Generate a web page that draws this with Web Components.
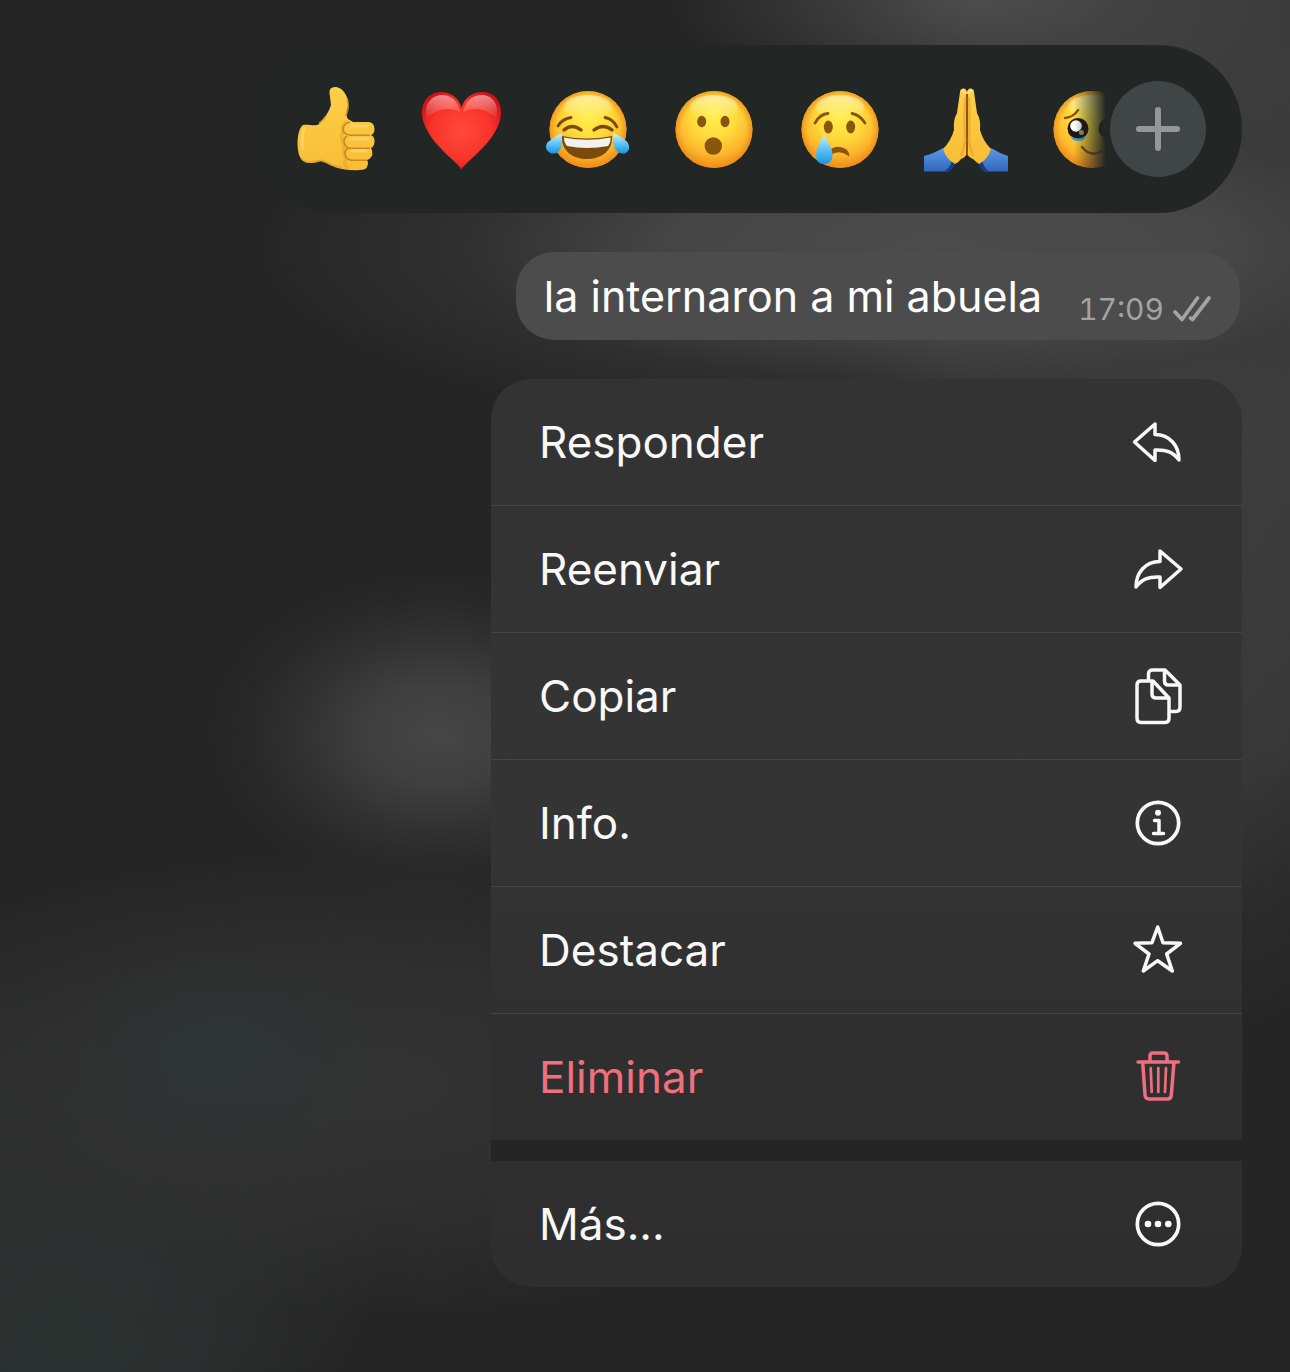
<!DOCTYPE html>
<html lang="es">
<head>
<meta charset="utf-8">
<meta name="viewport" content="width=device-width, initial-scale=1">
<title>Mensaje</title>
<style>
  body {
    margin: 0;
    min-height: 100vh;
    background: #252525;
    color: #f5f5f5;
    font-family: Inter, "Liberation Sans", sans-serif;
  }
</style>
</head>
<body>

<message-overlay>
  <reaction-bar></reaction-bar>
  <message-bubble time="17:09">la internaron a mi abuela</message-bubble>
  <context-menu>
    <menu-item icon="reply">Responder</menu-item>
    <menu-item icon="forward">Reenviar</menu-item>
    <menu-item icon="copy">Copiar</menu-item>
    <menu-item icon="info">Info.</menu-item>
    <menu-item icon="star">Destacar</menu-item>
    <menu-item icon="trash" danger>Eliminar</menu-item>
    <menu-item icon="more" apart>Más...</menu-item>
  </context-menu>
</message-overlay>

<script>
// shared gradients, every emoji svg gets its own copy
const defs = `
  <defs>
    <radialGradient id="face" cx="50%" cy="32%" r="70%">
      <stop offset="0" stop-color="#fff04f"/>
      <stop offset=".4" stop-color="#fedc3c"/>
      <stop offset=".7" stop-color="#fdba2d"/>
      <stop offset="1" stop-color="#ee8a1a"/>
    </radialGradient>
    <radialGradient id="rim" cx="50%" cy="50%" r="50%">
      <stop offset=".82" stop-color="#f09a1c" stop-opacity="0"/>
      <stop offset="1" stop-color="#ee8c18" stop-opacity=".75"/>
    </radialGradient>
    <linearGradient id="shine" x2="0" y2="1">
      <stop offset="0" stop-color="#fff" stop-opacity=".5"/>
      <stop offset="1" stop-color="#fff" stop-opacity="0"/>
    </linearGradient>
    <linearGradient id="tear" x2="0" y2="1">
      <stop offset="0" stop-color="#d5f3fc"/>
      <stop offset=".5" stop-color="#62c6f5"/>
      <stop offset="1" stop-color="#1794e6"/>
    </linearGradient>
    <linearGradient id="skin" x2="0" y2="1">
      <stop offset="0" stop-color="#ffcf4a"/>
      <stop offset="1" stop-color="#f8bd35"/>
    </linearGradient>
    <radialGradient id="heart" cx="50%" cy="50%" r="58%">
      <stop offset="0" stop-color="#ff4a3c"/>
      <stop offset=".65" stop-color="#f93329"/>
      <stop offset="1" stop-color="#cf1219"/>
    </radialGradient>
    <linearGradient id="sleeve" x2="0" y2="1">
      <stop offset="0" stop-color="#5b9aea"/>
      <stop offset="1" stop-color="#3167bd"/>
    </linearGradient>
  </defs>`;

const face = `
  <circle cx="48" cy="48.500" r="38.500" fill="url(#face)"/>
  <circle cx="48" cy="48.500" r="38.500" fill="url(#rim)"/>
  <ellipse cx="48" cy="26" rx="24" ry="12" fill="url(#shine)"/>`;

const emojis = [
  ["Me gusta", `
    <path fill="url(#skin)" d="M15 44C21 43 27 46 31 43C36 38 41 31 43 24L41.500 12Q41 6 47 6C55 6 61 16 60 25Q57 34 60 38L65 41H81Q86.500 42 86.500 48Q86.500 53 83 54Q87 56 86.500 61Q86 66 83 67Q85 70 84 75Q82 78 79 79Q81 82 79 86Q78 89 72 89C62 90 55 88 50 87C43 85 37 80 33 80C29 80 28 82 22 82Q15 82 12 76C8 67 9 48 15 44Z"/>
    <path fill="none" stroke="#e3a22a" stroke-width="3.500" opacity=".5" d="M59 40Q54 44 55 49Q52 58 56 64Q54 73 58 78Q55 84 60 88"/>
    <path fill="none" stroke="#c98a1f" stroke-width="1.600" d="M82 54.300H62Q55 53 55 48Q55 43 62 41M82 67.300H62Q56 66 56 60Q56 57 59 55M79 79.300H63Q57 78 57 72Q57 69 60 67"/>
    <path fill="none" stroke="#dca02b" stroke-width="2" opacity=".7" d="M13 77Q16 81 22 81Q28 81 33 79.500Q38 81 44 84L54 87M59 17Q62 28 57 35M31 42Q34 41 38 35"/>
    <path fill="none" stroke="#ffdf7a" stroke-width="3" stroke-linecap="round" opacity=".6" d="M63 45H80M63 58H80M64 70H78M16 48Q13 58 15 68"/>`],
  ["Me encanta", `
    <path fill="url(#heart)" d="M47.500 88.500C43 80 11 60 8 34C7 20 16 11 27 11C37 11 45 17 47.500 27C50 17 58 11 69 11C80 11 88 20 87 34C84 60 52 80 47.500 88.500Z"/>
    <path fill="url(#shine)" d="M13 38C9 23 18 14 28 14C37 14 43 19 46 31C36 26 22 27 13 38ZM49 31C52 19 59 14 68 14C78 14 86 23 82 38C73 27 59 26 49 31Z"/>`],
  ["Me divierte", `${face}
    <path fill="none" stroke="#7b4a0b" stroke-width="2.800" stroke-linecap="round" d="M18 45Q22 38 31 36.500M65 36.500Q73 38 77 46"/>
    <path fill="none" stroke="#7b4a0b" stroke-width="3.400" stroke-linecap="round" d="M24 49Q32 42 41 49M54 49Q63 42 72 49"/>
    <path fill="#7b4a0b" d="M22 55Q47 60 72 55C73 70 61 78 47 78C33 78 21 70 22 55Z"/>
    <path fill="#f1f1f1" d="M24 56.500Q47 61 70.500 56.500Q71 62 68 65Q47 69 27 65Q24 62 24 56.500Z"/>
    <path fill="url(#tear)" d="M21.500 52Q23 64 20 69Q16 74 10 72Q4 68 7 62Q11 58 21.500 52ZM73.500 52Q72 64 76 69Q80 74 86 72Q91 68 88 62Q84 57 73.500 52Z"/>`],
  ["Me sorprende", `${face}
    <g fill="#8a550e"><ellipse cx="35.700" cy="40.500" rx="4.500" ry="5.700"/><ellipse cx="59" cy="40.500" rx="4.500" ry="5.700"/><circle cx="47.300" cy="65" r="8.700"/></g>`],
  ["Me entristece", `${face}
    <g fill="#8a550e"><ellipse cx="36.300" cy="46" rx="4.500" ry="6.500"/><ellipse cx="58.700" cy="46" rx="4.500" ry="6.500"/></g>
    <path fill="none" stroke="#8a550e" stroke-width="2.800" stroke-linecap="round" d="M23 42Q28 33 36 32.500M60 32.500Q68 34 73 42"/>
    <path fill="#8a550e" d="M39 68Q44 65 48 66Q56 67 57.500 74Q57 76 55 74Q48 69 40 73Z"/>
    <path fill="url(#tear)" d="M32 52C34 60 40.500 66 40.500 74C40.500 80 37 83 32 83C27 83 24 80 24 74C24 66 30 60 32 52Z"/>`],
  ["Gracias", `
    <path fill="url(#sleeve)" d="M6 75Q17 72 25 67Q28 77 37 82L31 90.500H6ZM90 75Q81 72 73 67Q69 77 60 82L66 90.500H90Z"/>
    <path fill="#173b80" d="M31 90.500Q36 88 38 81L34 79Q33 86 26 90.500ZM66 90.500Q61 88 60 81L64 79Q65 86 71 90.500Z"/>
    <path fill="url(#skin)" d="M49 11Q48 7 45 7.500Q42 8 42 11L39 32Q35 39 36 49Q33 60 25 68Q28 78 37 83Q41 81 43 78Q48 76 49 72Q50 76 55 78Q58 81 61 83Q70 78 73 68Q65 60 62 49Q63 39 59 32L56 11Q56 8 53 7.500Q50 7 49 11Z"/>
    <path fill="none" stroke="#93540c" stroke-width="2" d="M49 13V74"/>
    <path fill="none" stroke="#e8a127" stroke-width="2.500" opacity=".6" d="M47 16Q46 40 47 60Q46 68 43 75M51 16Q52 40 51 60Q52 68 55 75"/>
    <path fill="none" stroke="#ffe18b" stroke-width="2" stroke-linecap="round" d="M44 10Q46 8 47 12M51 12Q52 8 54 10"/>`],
  ["Conmovido", `${face}
    <g fill="none" stroke="#8a550e" stroke-width="2.500" stroke-linecap="round"><path d="M21 37Q30 36 34 29M75 37Q66 36 62 29M38 66Q47 77 58 70"/></g>
    <g fill="#20150f"><circle cx="34" cy="47.500" r="10.500"/><circle cx="65" cy="47.500" r="10.500"/></g>
    <g fill="#fff"><circle cx="32" cy="45" r="5.800"/><circle cx="66" cy="45" r="5.800"/></g>
    <g fill="#8d9a7c"><circle cx="37.500" cy="51.500" r="2.500"/><circle cx="68" cy="51.500" r="2.500"/></g>
    <path fill="#45a8ce" d="M27 55Q34 60 41 55Q42 60 34 60Q27 60 27 55ZM58 55Q65 60 72 55Q72 60 65 60Q58 60 58 55Z"/>`],
];

const icons = {
  reply: `<path d="M27 12V22.500C42 22.500 51 34 51 48C45 40 39 37.500 27 38V48.500L6.500 30Z"/>`,
  forward: `<path d="M32 12V22.500C17 22.500 8 34 8 48C14 40 20 37.500 32 38V48.500L53 30Z"/>`,
  copy: `<path d="M25 15H13Q9 15 9 19V52Q9 56.500 13 56.500H37Q41 56.500 41 52V32L25 15ZM24 15V28Q24 32 28 32H41M20.500 13V8Q20.500 4 25 4H37L52 19V41Q52 45.500 48 45.500H43M36.500 4V15Q36.500 19 40.500 19H52"/>`,
  info: `<circle cx="30" cy="30" r="20.700" stroke-width="3.700"/><circle cx="30" cy="19.700" r="3" fill="currentColor" stroke="none"/><path d="M26.500 27.500H31V40.500M25.500 40.500H35.500"/>`,
  star: `<path d="M29.700 7L35 22.700L52.500 23.300L38.700 34L44.300 51L29.700 40.700L15.300 51L21 34L7 23.300L24 22.700Z"/>`,
  trash: `<path d="M10 15H50.500M22 14.500V9Q22 6 25 6H36Q39 6 39 9V14.500M14.700 15L17 48Q17.300 52 21 52H39.500Q43 52 43.300 48L46 15"/><path stroke-width="2.700" d="M22.700 21L23.700 45M30.300 21V45M38 21L37 45"/>`,
  more: `<circle cx="30" cy="30" r="20.700" stroke-width="3.700"/><g fill="currentColor" stroke="none"><circle cx="20" cy="30" r="3.300"/><circle cx="30" cy="30" r="3.300"/><circle cx="40.300" cy="30" r="3.300"/></g>`,
};

customElements.define(
  "message-overlay",
  class extends HTMLElement {
    constructor() {
      super();
      this.attachShadow({ mode: "open" });
    }

    connectedCallback() {
      this.shadowRoot.innerHTML = `
        <style>
          :host {
            display: flex;
            flex-direction: column;
            align-items: flex-end;
            gap: 39px;
            box-sizing: border-box;
            min-height: 100vh;
            padding: 45px 48px;
            /* blurred chat behind the menu */
            background:
              radial-gradient(ellipse 18% 12% at 34% 53.500%, #464646, #434343e0 30%, #3a3a3a90 60%, #2c2c2c40 85%, transparent),
              radial-gradient(ellipse 24% 8% at 76% 0%, #4c4c4c, #46464699 50%, transparent),
              radial-gradient(ellipse 52% 14% at 72% 18%, #4b4b4b, #494949e0 40%, #3838388c 70%, transparent),
              radial-gradient(ellipse 28% 56% at 92% 20%, #404040, #3b3b3be0 65%, #30303080 85%, transparent),
              radial-gradient(ellipse 12% 8% at 17% 77%, #2e3535, #2e343499 50%, transparent),
              radial-gradient(ellipse 18% 12% at 5% 98%, #2b3331, #2b313099 50%, transparent),
              radial-gradient(ellipse 44% 17% at 28% 79%, #343434, #323232b0 55%, transparent),
              radial-gradient(ellipse 26% 20% at 4% 90%, #2e2f2f, #2c2d2db0 60%, transparent),
              #252525;
          }
        </style>
        <slot></slot>
      `;
    }
  }
);

customElements.define(
  "reaction-bar",
  class extends HTMLElement {
    constructor() {
      super();
      this.attachShadow({ mode: "open" });
    }

    connectedCallback() {
      this.shadowRoot.innerHTML = `
        <style>
          :host {
            display: flex;
            align-items: center;
            box-sizing: border-box;
            width: 990px;
            max-width: 100%;
            padding: 36px;
            border-radius: 84px;
            background: #222624;
          }
          .track {
            display: flex;
            flex: 1;
            gap: 30px;
            min-width: 0;
            overflow: hidden;
            -webkit-mask-image: linear-gradient(to left, transparent 4px, #000 36px);
            mask-image: linear-gradient(to left, transparent 4px, #000 36px);
          }
          button {
            flex: none;
            width: 96px;
            height: 96px;
            padding: 0;
            border: 0;
            border-radius: 50%;
            background: none;
            color: #949697;
          }
          svg {
            display: block;
            width: 96px;
            height: 96px;
          }
          .add {
            background: #404546;
          }
        </style>
        <div class="track">
          ${emojis.map(([label, art]) => `<button aria-label="${label}"><svg viewBox="0 0 96 96">${defs}${art}</svg></button>`).join("")}
        </div>
        <button class="add" aria-label="Más reacciones">
          <svg viewBox="0 0 96 96" fill="none" stroke="currentColor" stroke-width="6" stroke-linecap="round"><path d="M48 29V67M29 48H67"/></svg>
        </button>
      `;
    }
  }
);

customElements.define(
  "message-bubble",
  class extends HTMLElement {
    constructor() {
      super();
      this.attachShadow({ mode: "open" });
    }

    connectedCallback() {
      this.shadowRoot.innerHTML = `
        <style>
          :host {
            display: flex;
            align-items: center;
            gap: 36px;
            box-sizing: border-box;
            min-height: 88px;
            margin-right: 2px;
            padding: 0 28px;
            border-radius: 38px;
            background: #4c4c4c;
            color: #fff;
            font-size: 43px;
            line-height: 56px;
          }
          .meta {
            display: flex;
            align-items: center;
            align-self: flex-end;
            gap: 8px;
            padding-bottom: 12px;
            color: #a3a3a3;
            font-size: 30px;
            line-height: 38px;
            font-variant-numeric: tabular-nums;
          }
          svg {
            width: 40px;
            height: 28px;
          }
        </style>
        <span><slot></slot></span>
        <span class="meta">
          <time>${this.getAttribute("time")}</time>
          <svg viewBox="0 0 40 28" fill="none" stroke="currentColor" stroke-width="3.700" stroke-linecap="round" stroke-linejoin="round" role="img" aria-label="Entregado"><path d="M3 17L10 24.500L25.500 3M18.500 23L20.500 24.500L37 3"/></svg>
        </span>
      `;
    }
  }
);

customElements.define(
  "context-menu",
  class extends HTMLElement {
    constructor() {
      super();
      this.attachShadow({ mode: "open" });
    }

    connectedCallback() {
      this.shadowRoot.innerHTML = `
        <style>
          :host {
            display: block;
            width: 751px;
            max-width: 100%;
            border-radius: 40px;
            overflow: hidden;
            background: linear-gradient(#333333, #343434 50%, #2f2f2f 75%, #2e2e2e);
          }
        </style>
        <slot></slot>
      `;
    }
  }
);

customElements.define(
  "menu-item",
  class extends HTMLElement {
    constructor() {
      super();
      this.attachShadow({ mode: "open" });
    }

    connectedCallback() {
      this.shadowRoot.innerHTML = `
        <style>
          :host {
            display: block;
          }
          :host(:not(:first-child)) {
            border-top: 1px solid #454545;
          }
          :host([apart]) {
            border-top: 21px solid #252525 !important;
          }
          button {
            display: flex;
            align-items: center;
            justify-content: space-between;
            width: 100%;
            height: 126px;
            padding: 0 54px 0 48px;
            border: 0;
            background: none;
            color: #f8f8f8;
            font: inherit;
            font-size: 44px;
            line-height: 56px;
            text-align: left;
          }
          :host([danger]) button {
            color: #ef6f7f;
          }
          svg {
            width: 60px;
            height: 60px;
          }
        </style>
        <button>
          <span><slot></slot></span>
          <svg viewBox="0 0 60 60" fill="none" stroke="currentColor" stroke-width="3.500" stroke-linecap="round" stroke-linejoin="round" aria-hidden="true">${icons[this.getAttribute("icon")]}</svg>
        </button>
      `;
    }
  }
);
</script>
</body>
</html>
